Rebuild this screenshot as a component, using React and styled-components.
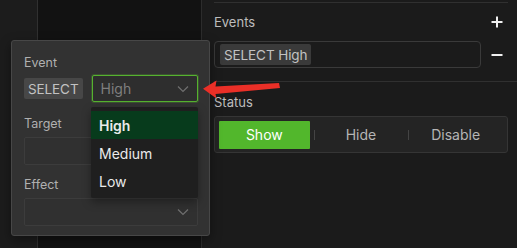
import React from "react";
import styled, { createGlobalStyle } from "styled-components";

const GlobalStyle = createGlobalStyle`
  html, body {
    margin: 0;
    padding: 0;
    background: #1b1b1b;
  }
  body {
    font-family: Inter, "Noto Sans", "Liberation Sans", sans-serif;
    -webkit-font-smoothing: antialiased;
  }
`;

const Page = styled.div`
  position: relative;
  width: 517px;
  height: 248px;
  overflow: hidden;
  display: grid;
  grid-template-columns: 38px 164px 1fr;
  background: #1b1b1b;
`;

const SideColumn = styled.div`
  background: #1c1c1c;
  border-right: 1px solid #303030;
`;

const Canvas = styled.div`
  background: #121212;
  border-right: 1px solid #2c2c2c;
`;

const Panel = styled.div`
  padding: 0 9px 0 12px;
  display: flex;
  flex-direction: column;
`;

const Divider = styled.div`
  height: 1px;
  flex-shrink: 0;
  background: #303030;
  margin-top: ${(p) => p.$mt}px;
  margin-right: ${(p) => (p.$full ? "-9px" : "0")};
`;

const SectionHead = styled.div`
  display: flex;
  align-items: center;
  justify-content: space-between;
  height: 16px;
  margin-top: ${(p) => p.$mt}px;
`;

const SectionTitle = styled.span`
  font-size: 13px;
  color: #bdbdbd;
`;

const IconButton = styled.span`
  width: 12px;
  height: 12px;
  margin-right: 5px;
  display: flex;
  align-items: center;
  justify-content: center;
`;

const EventsRow = styled.div`
  display: flex;
  align-items: center;
  gap: 10px;
  margin-top: 11px;
`;

const TagBox = styled.div`
  flex: 1;
  height: 25px;
  border: 1px solid #3a3a3a;
  border-radius: 4px;
  display: flex;
  align-items: center;
  padding: 0 5px;
`;

const Tag = styled.span`
  display: inline-flex;
  align-items: center;
  height: ${(p) => p.$h || 21}px;
  padding: 0 ${(p) => p.$px || 4}px;
  background: ${(p) => p.$bg || "#3a3a3a"};
  color: #c2c2c2;
  font-size: 13.5px;
  border-radius: 2px;
  letter-spacing: -0.1px;
`;

const Segmented = styled.div`
  margin-top: 6px;
  height: 35px;
  border: 1px solid #353535;
  background: #242424;
  border-radius: 3px;
  display: grid;
  grid-template-columns: 1fr 1fr 1fr;
  align-items: center;
  padding: 0 4px;
`;

const Segment = styled.div`
  position: relative;
  height: 28px;
  display: flex;
  align-items: center;
  justify-content: center;
  font-size: 14px;
  color: ${(p) => (p.$active ? "#ffffff" : "#b5b5b5")};
  background: ${(p) => (p.$active ? "#52b72c" : "transparent")};
  border-radius: 1px;
  margin-right: ${(p) => (p.$active ? "4px" : "0")};
  &::before {
    content: "";
    display: ${(p) => (p.$sep ? "block" : "none")};
    position: absolute;
    left: 0;
    top: 9px;
    width: 1px;
    height: 10px;
    background: #444;
  }
`;

const Popover = styled.div`
  position: absolute;
  left: 11px;
  top: 40px;
  width: 199px;
  height: 196px;
  box-sizing: border-box;
  background: #323232;
  border: 1px solid #474747;
  border-radius: 3px;
  padding: 14px 11px 0 12px;
  box-shadow: 0 4px 12px rgba(0, 0, 0, 0.4);
`;

const FieldLabel = styled.div`
  font-size: 12.5px;
  color: #b0b0b0;
  height: 16px;
  line-height: 16px;
  margin-top: ${(p) => p.$mt || 0}px;
`;

const FieldRow = styled.div`
  display: flex;
  align-items: center;
  gap: 9px;
  margin-top: ${(p) => p.$mt || 5}px;
`;

const Select = styled.div`
  position: relative;
  flex: 1;
  height: ${(p) => p.$h || 28}px;
  box-sizing: border-box;
  border: 1px solid ${(p) => (p.$focus ? "#56b22f" : "#3c3c3c")};
  box-shadow: ${(p) => (p.$focus ? "0 0 0 1px rgba(86,178,47,0.25)" : "none")};
  background: ${(p) => (p.$focus ? "#2e2e2e" : "#303030")};
  border-radius: 2px;
  display: flex;
  align-items: center;
  justify-content: space-between;
  padding: 0 8px;
  font-size: 14px;
  color: #7f7f7f;
`;

const Menu = styled.div`
  position: absolute;
  left: 79px;
  top: 66px;
  width: 107px;
  height: 91px;
  box-sizing: border-box;
  background: #1f1f1f;
  border-radius: 2px;
  padding-top: 4px;
  box-shadow: 0 4px 10px rgba(0, 0, 0, 0.35);
`;

const MenuItem = styled.div`
  height: 28px;
  display: flex;
  align-items: center;
  padding: 0 8px;
  font-size: 14px;
  font-weight: ${(p) => (p.$active ? 600 : 400)};
  color: #eaeaea;
  background: ${(p) => (p.$active ? "#073b1c" : "transparent")};
`;

const Arrow = styled.svg`
  position: absolute;
  left: 200px;
  top: 76px;
`;

const Chevron = () => (
  <svg width="12" height="8" viewBox="0 0 12 8">
    <path d="M1 1.5 L6 6.5 L11 1.5" fill="none" stroke="#6f6f6f" strokeWidth="1.2" />
  </svg>
);

const Plus = () => (
  <svg width="12" height="12" viewBox="0 0 12 12">
    <path d="M6 0.5 V11.5 M0.5 6 H11.5" stroke="#f0f0f0" strokeWidth="2" />
  </svg>
);

const Minus = () => (
  <svg width="12" height="12" viewBox="0 0 12 12">
    <path d="M0.5 6 H11.5" stroke="#f0f0f0" strokeWidth="2" />
  </svg>
);

const App = () => {
  const statuses = ["Show", "Hide", "Disable"];
  return (
    <>
      <GlobalStyle />
      <Page>
        <SideColumn />
        <Canvas />
        <Panel>
          <Divider $mt={2} />
          <SectionHead $mt={11}>
            <SectionTitle>Events</SectionTitle>
            <IconButton>
              <Plus />
            </IconButton>
          </SectionHead>
          <EventsRow>
            <TagBox>
              <Tag>SELECT High</Tag>
            </TagBox>
            <IconButton>
              <Minus />
            </IconButton>
          </EventsRow>
          <Divider $full $mt={13} />
          <SectionHead $mt={12}>
            <SectionTitle>Status</SectionTitle>
          </SectionHead>
          <Segmented>
            {statuses.map((s, i) => (
              <Segment key={s} $active={i === 0} $sep={i > 0}>
                {s}
              </Segment>
            ))}
          </Segmented>
        </Panel>

        <Popover>
          <FieldLabel>Event</FieldLabel>
          <FieldRow $mt={4}>
            <Tag $bg="#474747" $px={4} $h={21}>SELECT</Tag>
            <Select $focus $h={27}>
              <span>High</span>
              <Chevron />
            </Select>
          </FieldRow>
          <FieldLabel $mt={14}>Target</FieldLabel>
          <FieldRow>
            <Select />
          </FieldRow>
          <FieldLabel $mt={12}>Effect</FieldLabel>
          <FieldRow>
            <Select>
              <span />
              <Chevron />
            </Select>
          </FieldRow>
          <Menu>
            <MenuItem $active>High</MenuItem>
            <MenuItem>Medium</MenuItem>
            <MenuItem>Low</MenuItem>
          </Menu>
        </Popover>

        <Arrow width="84" height="26" viewBox="0 0 84 26">
          <polygon
            points="3,12.7 16.5,4.5 15.5,10.5 79,7 80,12 15.5,18 16.5,22.5"
            fill="#ea2f27"
          />
        </Arrow>
      </Page>
    </>
  );
};

export default App;
